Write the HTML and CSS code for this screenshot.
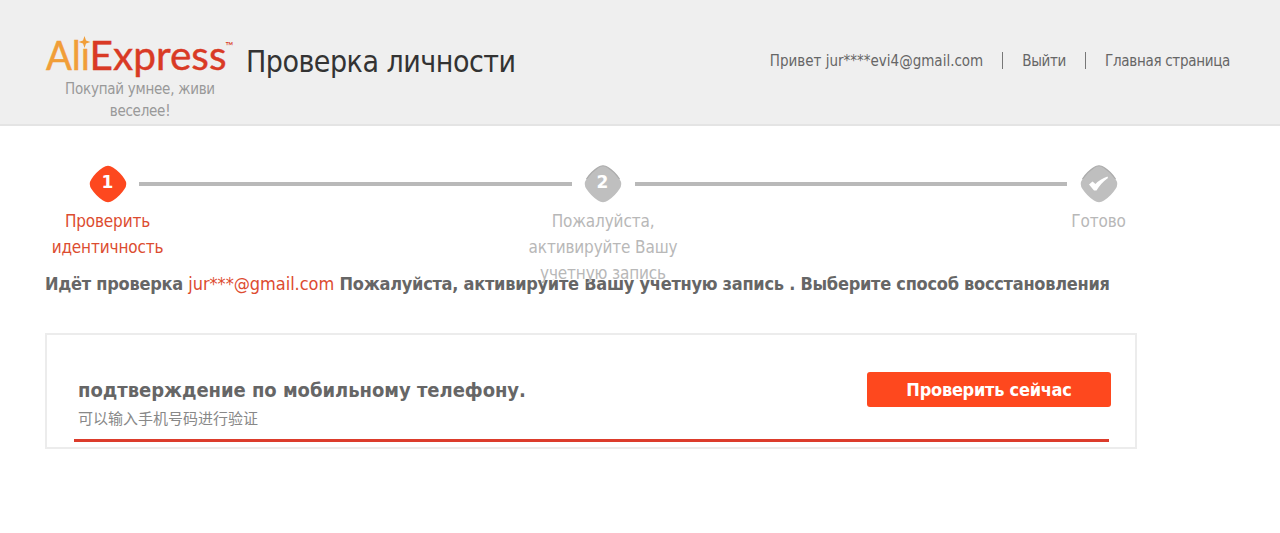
FILE: index.html
```
<!DOCTYPE html>
<html lang="ru">
<head>
    <meta charset="UTF-8">
    <title>Проверка личности</title>
    <link rel="stylesheet" href="styles.css">
</head>
<body>
<header class="header">
    <div class="brand">
        <svg class="logo" width="190" height="40" viewBox="0 0 190 40">
            <text class="logo-ali" x="1" y="32.5" textLength="44" lengthAdjust="spacingAndGlyphs">Ali</text>
            <text class="logo-express" x="44.5" y="32.5" textLength="137" lengthAdjust="spacingAndGlyphs">Express</text>
            <!-- Звезда вместо точки над i -->
            <rect class="logo-gap" x="35" y="-1" width="9.5" height="12"/>
            <path class="logo-star" d="M39.5 -1 L41 3.5 L45.5 5 L41 6.5 L39.5 11 L38 6.5 L33.5 5 L38 3.5 Z"/>
            <text class="logo-tm" x="180.5" y="13">™</text>
        </svg>
        <p class="slogan">Покупай умнее, живи веселее!</p>
    </div>
    <h1 class="title">Проверка личности</h1>
    <nav class="nav">
        <span class="hello">Привет jur****evi4@gmail.com</span>
        <a class="exit">Выйти</a>
        <a class="home">Главная страница</a>
    </nav>
</header>

<main class="content">
    <!-- Шаги проверки -->
    <div class="steps">
        <div class="step active">
            <svg width="38" height="38" viewBox="0 0 38 38">
                <path class="diamond" d="M14 2.5 Q19 -1 24 2.5 Q31 7 35.5 14 Q39 19 35.5 24 Q31 31 24 35.5 Q19 39 14 35.5 Q7 31 2.5 24 Q-1 19 2.5 14 Q7 7 14 2.5 Z"/>
                <text class="digit" x="18.5" y="23">1</text>
            </svg>
            <p class="label">Проверить<br>идентичность</p>
        </div>
        <div class="line"></div>
        <div class="step">
            <svg width="38" height="38" viewBox="0 0 38 38">
                <path class="diamond" d="M14 2.5 Q19 -1 24 2.5 Q31 7 35.5 14 Q39 19 35.5 24 Q31 31 24 35.5 Q19 39 14 35.5 Q7 31 2.5 24 Q-1 19 2.5 14 Q7 7 14 2.5 Z"/>
                <path class="shade" d="M2.5 14 Q7 7 14 2.5 Q19 -1 24 2.5 Q31 7 35.5 14"/>
                <text class="digit" x="18.5" y="23">2</text>
            </svg>
            <p class="label">Пожалуйста,<br>активируйте Вашу<br>учетную запись</p>
        </div>
        <div class="line"></div>
        <div class="step">
            <svg width="38" height="38" viewBox="0 0 38 38">
                <path class="diamond" d="M14 2.5 Q19 -1 24 2.5 Q31 7 35.5 14 Q39 19 35.5 24 Q31 31 24 35.5 Q19 39 14 35.5 Q7 31 2.5 24 Q-1 19 2.5 14 Q7 7 14 2.5 Z"/>
                <path class="shade" d="M2.5 14 Q7 7 14 2.5 Q19 -1 24 2.5 Q31 7 35.5 14"/>
                <path class="check" d="M9 19.5 L12.5 16.5 L15.5 19 Q20 14 27.5 11.5 L28 13 Q21 18 16.5 25.5 L14 25.5 Z"/>
            </svg>
            <p class="label">Готово</p>
        </div>
    </div>

    <p class="notice">Идёт проверка <span class="mail">jur***@gmail.com</span> Пожалуйста, активируйте Вашу учетную запись . Выберите способ восстановления</p>

    <section class="card">
        <div class="method">
            <div>
                <h2 class="method-title">подтверждение по мобильному телефону.</h2>
                <p class="method-hint">可以输入手机号码进行验证</p>
            </div>
            <button class="btn">Проверить сейчас</button>
        </div>
    </section>
</main>
</body>
</html>
```
FILE: styles.css
```
* {
    box-sizing: border-box;
    margin: 0;
    padding: 0;
}

body {
    background: #fff;
    color: #666;
    font-family: "DejaVu Sans Condensed", "Noto Sans", "Noto Sans CJK SC", sans-serif;
    overflow: hidden;
}

/* Шапка */
.header {
    display: flex;
    height: 126px;
    padding: 37px 50px 0 45px;
    background: #efefef;
    border-bottom: 2px solid #e4e4e4;
}

.brand {
    width: 190px;
    margin-right: 11px;
}

.logo {
    display: block;
    overflow: visible;
}

.logo text {
    font-family: Lato, sans-serif;
    font-size: 40px;
}

.logo .logo-ali {
    fill: #f19e38;
    stroke: #f19e38;
    stroke-width: 0.5;
}

.logo .logo-express {
    fill: #d93a25;
    stroke: #d93a25;
    stroke-width: 0.4;
}

.logo .logo-tm {
    fill: #d93a25;
    font-size: 11px;
}

.logo-gap {
    fill: #efefef;
}

.logo-star {
    fill: #f19e38;
}

.slogan {
    padding: 1px 16px 0;
    color: #999;
    font-size: 15px;
    letter-spacing: -0.25px;
    line-height: 22px;
    text-align: center;
}

.title {
    padding-top: 6px;
    color: #333;
    font-size: 30px;
    font-weight: normal;
    letter-spacing: -0.5px;
    line-height: 38px;
    white-space: nowrap;
}

.nav {
    display: flex;
    margin-left: auto;
    padding-top: 15px;
    font-size: 15px;
    line-height: 19px;
    white-space: nowrap;
}

.nav a {
    height: 17px;
    margin-left: 19px;
    padding-left: 19px;
    border-left: 1px solid #777;
    letter-spacing: -0.3px;
}

.content {
    padding: 39px 0 0 45px;
}

/* Шаги */
.steps {
    display: flex;
    width: 1116px;
    height: 107px;
}

.step {
    position: relative;
    z-index: 1;
    flex: none;
    display: flex;
    flex-direction: column;
    align-items: center;
    width: 125px;
    color: #b8b8b8;
}

.step svg {
    display: block;
    flex: none;
}

.diamond {
    fill: #bfbfbf;
}

.active .diamond {
    fill: #fd481f;
}

.shade {
    fill: none;
    stroke: #acacac;
    stroke-width: 1.2;
}

.check {
    fill: #fff;
}

.digit {
    fill: #fff;
    font-family: "DejaVu Sans", sans-serif;
    font-size: 17px;
    font-weight: bold;
    text-anchor: middle;
}

/* Фон подписи закрывает верх строки под шагами */
.label {
    padding-top: 5px;
    background: linear-gradient(#fff, #fff) no-repeat 0 0 / 100% 76px;
    font-size: 17px;
    letter-spacing: -0.15px;
    line-height: 26px;
    text-align: center;
    white-space: nowrap;
}

.active {
    color: #dc4c30;
}

.line {
    flex: 1;
    height: 4px;
    margin: 17px -31px 0;
    background: #b9b9b9;
}

.notice {
    font-size: 18px;
    font-weight: bold;
    letter-spacing: -0.26px;
    line-height: 23px;
    white-space: nowrap;
}

.mail {
    color: #dd4b30;
    font-weight: normal;
    letter-spacing: -0.05px;
}

/* Способ восстановления */
.card {
    width: 1092px;
    height: 116px;
    margin-top: 38px;
    padding: 37px 27px 0;
    border: 2px solid #ececec;
}

.method {
    display: flex;
    justify-content: space-between;
    align-items: flex-start;
    width: 1035px;
    height: 70px;
    padding-left: 4px;
    border-bottom: 3px solid #dc3c2c;
}

.method-title {
    padding-top: 5px;
    font-size: 20px;
    letter-spacing: -0.03px;
    line-height: 26px;
}

.method-hint {
    color: #888;
    font-family: "Noto Sans CJK SC", sans-serif;
    font-size: 15px;
    line-height: 30px;
}

.btn {
    width: 244px;
    height: 35px;
    margin-right: -2px;
    border: none;
    border-radius: 3px;
    background: #fe481e;
    color: #fff;
    font-family: inherit;
    font-size: 18px;
    font-weight: bold;
    letter-spacing: -0.25px;
}
```
